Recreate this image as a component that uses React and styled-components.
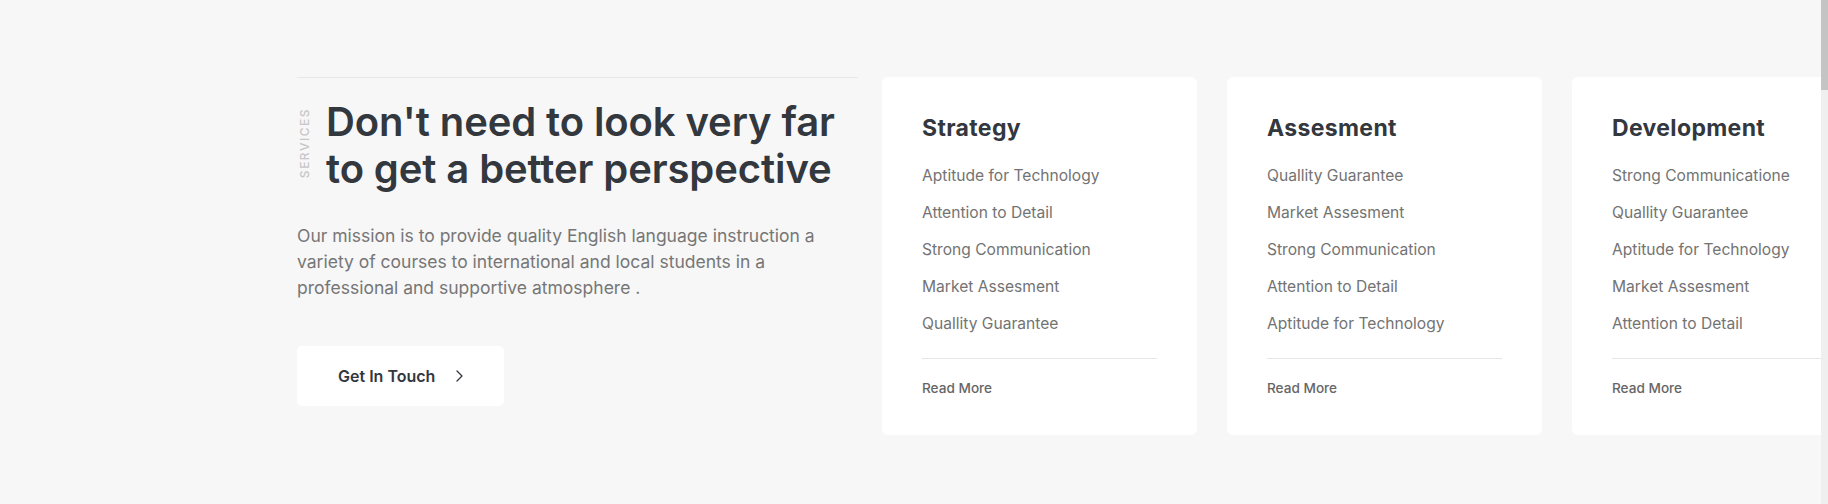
import React from "react";
import styled, { createGlobalStyle } from "styled-components";

const GlobalStyle = createGlobalStyle`
  html { background: #f7f7f7; }
  body {
    margin: 0;
    background: #f7f7f7;
    font-family: Inter, "Noto Sans", Arial, sans-serif;
    -webkit-font-smoothing: antialiased;
  }
`;

const Page = styled.main`
  min-height: 504px;
  overflow: hidden;
`;

const ScrollTrack = styled.div`
  position: fixed;
  top: 0;
  right: 0;
  width: 7px;
  height: 100vh;
  background: #efefef;
  z-index: 10;
`;

const ScrollThumb = styled.div`
  width: 100%;
  height: 90px;
  background: #c4c4c4;
`;

const Section = styled.section`
  display: flex;
  align-items: flex-start;
  gap: 24px;
  padding: 77px 0 0 297px;
`;

const Intro = styled.div`
  flex: 0 0 561px;
  border-top: 1px solid #e8e8e8;
  padding-top: 20px;
`;

const HeadingRow = styled.div`
  display: flex;
  align-items: flex-start;
  gap: 15px;
`;

const Eyebrow = styled.span`
  writing-mode: vertical-rl;
  transform: rotate(180deg);
  margin: 10px 0 0 2px;
  font-size: 12px;
  line-height: 12px;
  font-weight: 500;
  letter-spacing: 1.5px;
  color: #c6c6c6;
`;

const Heading = styled.h2`
  margin: 0;
  font-size: 40px;
  line-height: 47px;
  font-weight: 600;
  letter-spacing: -0.1px;
  color: #33373e;
`;

const Lead = styled.p`
  margin: 31px 0 0;
  font-size: 17.5px;
  line-height: 26px;
  color: #767676;
`;

const CtaButton = styled.a`
  display: inline-flex;
  align-items: center;
  gap: 21px;
  box-sizing: border-box;
  height: 60px;
  width: 207px;
  margin-top: 45px;
  padding: 0 0 0 41px;
  background: #ffffff;
  border-radius: 5px;
  font-size: 16px;
  font-weight: 600;
  color: #33373e;
  text-decoration: none;
  cursor: pointer;
`;

const Cards = styled.div`
  display: flex;
  gap: 30px;
`;

const Card = styled.article`
  flex: 0 0 315px;
  box-sizing: border-box;
  height: 358px;
  padding: 36px 40px 38px;
  background: #ffffff;
  border-radius: 6px;
`;

const CardTitle = styled.h3`
  margin: 0;
  font-size: 23px;
  line-height: 30px;
  font-weight: 700;
  letter-spacing: 0.35px;
  color: #33373e;
`;

const FeatureList = styled.ul`
  list-style: none;
  margin: 14px 0 0;
  padding: 0;
`;

const Feature = styled.li`
  font-size: 15.6px;
  line-height: 37px;
  color: #737373;
  white-space: nowrap;
`;

const CardFooter = styled.div`
  margin-top: 16px;
  padding-top: 18px;
  border-top: 1px solid #e6e6e6;
`;

const ReadMore = styled.a`
  font-size: 13.6px;
  line-height: 20px;
  font-weight: 500;
  color: #666666;
  text-decoration: none;
`;

const Chevron = () => (
  <svg width="7" height="12" viewBox="0 0 7 12" fill="none">
    <path d="M1 1l5 5-5 5" stroke="#33373e" strokeWidth="1.3" strokeLinecap="round" strokeLinejoin="round" />
  </svg>
);

const services = [
  {
    title: "Strategy",
    items: [
      "Aptitude for Technology",
      "Attention to Detail",
      "Strong Communication",
      "Market Assesment",
      "Quallity Guarantee",
    ],
  },
  {
    title: "Assesment",
    items: [
      "Quallity Guarantee",
      "Market Assesment",
      "Strong Communication",
      "Attention to Detail",
      "Aptitude for Technology",
    ],
  },
  {
    title: "Development",
    items: [
      "Strong Communicatione",
      "Quallity Guarantee",
      "Aptitude for Technology",
      "Market Assesment",
      "Attention to Detail",
    ],
  },
];

export default function App() {
  return (
    <Page>
      <GlobalStyle />
      <Section>
        <Intro>
          <HeadingRow>
            <Eyebrow>SERVICES</Eyebrow>
            <Heading>
              Don't need to look very far
              <br />
              to get a better perspective
            </Heading>
          </HeadingRow>
          <Lead>
            Our mission is to provide quality English language instruction a variety of courses to
            international and local students in a professional and supportive atmosphere .
          </Lead>
          <CtaButton>
            Get In Touch
            <Chevron />
          </CtaButton>
        </Intro>
        <Cards>
          {services.map((s) => (
            <Card key={s.title}>
              <CardTitle>{s.title}</CardTitle>
              <FeatureList>
                {s.items.map((it) => (
                  <Feature key={it}>{it}</Feature>
                ))}
              </FeatureList>
              <CardFooter>
                <ReadMore>Read More</ReadMore>
              </CardFooter>
            </Card>
          ))}
        </Cards>
      </Section>
      <ScrollTrack>
        <ScrollThumb />
      </ScrollTrack>
    </Page>
  );
}
